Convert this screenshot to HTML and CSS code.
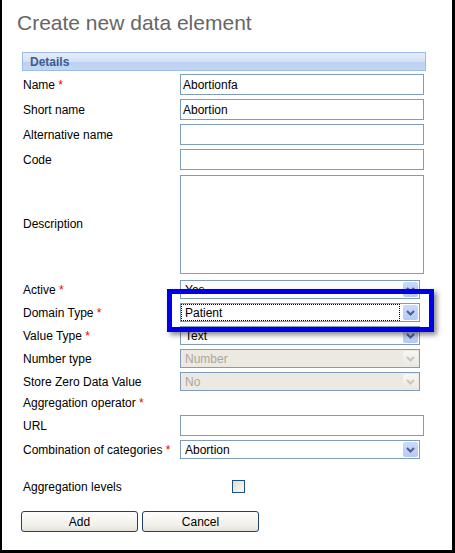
FILE: index.html
```html
<!DOCTYPE html>
<html>
<head>
<meta charset="utf-8">
<title>Create new data element</title>
<link rel="stylesheet" href="styles.css">
</head>
<body>
<h1 class="title">Create new data element</h1>
<div class="form">
  <div class="section-head">Details</div>
  <div class="grid">
    <label class="lbl">Name <span class="req">*</span></label>
    <div class="input">Abortionfa</div>

    <label class="lbl">Short name</label>
    <div class="input">Abortion</div>

    <label class="lbl">Alternative name</label>
    <div class="input"></div>

    <label class="lbl">Code</label>
    <div class="input"></div>

    <label class="lbl">Description</label>
    <div class="input textarea"></div>

    <label class="lbl first-select">Active <span class="req">*</span></label>
    <div class="select first-select"><span class="val">Yes</span><span class="arrow"><svg width="9" height="6" viewBox="0 0 9 6"><path d="M1 1 L4.5 4.5 L8 1" fill="none" stroke="#4d6185" stroke-width="2"/></svg></span></div>

    <label class="lbl">Domain Type <span class="req">*</span></label>
    <div class="select"><span class="val focus">Patient</span><span class="arrow"><svg width="9" height="6" viewBox="0 0 9 6"><path d="M1 1 L4.5 4.5 L8 1" fill="none" stroke="#4d6185" stroke-width="2"/></svg></span></div>

    <label class="lbl">Value Type <span class="req">*</span></label>
    <div class="select"><span class="val">Text</span><span class="arrow"><svg width="9" height="6" viewBox="0 0 9 6"><path d="M1 1 L4.5 4.5 L8 1" fill="none" stroke="#4d6185" stroke-width="2"/></svg></span></div>

    <label class="lbl">Number type</label>
    <div class="select disabled"><span class="val">Number</span><span class="arrow"><svg width="9" height="6" viewBox="0 0 9 6"><path d="M1 1 L4.5 4.5 L8 1" fill="none" stroke="#c9c7ba" stroke-width="2"/></svg></span></div>

    <label class="lbl">Store Zero Data Value</label>
    <div class="select disabled"><span class="val">No</span><span class="arrow"><svg width="9" height="6" viewBox="0 0 9 6"><path d="M1 1 L4.5 4.5 L8 1" fill="none" stroke="#c9c7ba" stroke-width="2"/></svg></span></div>

    <label class="lbl op">Aggregation operator <span class="req">*</span></label>
    <div class="op"></div>

    <label class="lbl">URL</label>
    <div class="input"></div>

    <label class="lbl">Combination of categories <span class="req">*</span></label>
    <div class="select"><span class="val">Abortion</span><span class="arrow"><svg width="9" height="6" viewBox="0 0 9 6"><path d="M1 1 L4.5 4.5 L8 1" fill="none" stroke="#4d6185" stroke-width="2"/></svg></span></div>
  </div>

  <div class="levels">
    <span class="levels-lbl">Aggregation levels</span>
    <span class="checkbox"></span>
  </div>

  <div class="buttons">
    <button class="btn">Add</button>
    <button class="btn">Cancel</button>
  </div>
</div>
<div class="highlight"></div>
</body>
</html>
```

FILE: styles.css
```css
html, body {
  margin: 0;
  padding: 0;
}
body {
  width: 455px;
  height: 553px;
  box-sizing: border-box;
  border-left: 2px solid #000;
  border-right: 3px solid #000;
  border-bottom: 3px solid #000;
  background: #fff;
  font-family: "Liberation Sans", Arial, sans-serif;
  font-size: 12px;
  color: #000;
  position: relative;
  overflow: hidden;
}
.title {
  margin: 11px 0 0 15px;
  font-size: 21px;
  font-weight: normal;
  line-height: 24px;
  color: #666;
}
.form {
  margin: 17px 0 0 20px;
  width: 404px;
}
.section-head {
  height: 17px;
  border: 1px solid #9dbbe8;
  background: linear-gradient(#e6eef9 0%, #d3e1f5 50%, #bcd0f1 52%, #c3d6f3 100%);
  color: #3a5c94;
  font-weight: bold;
  font-size: 12px;
  line-height: 18px;
  padding-left: 7px;
  box-sizing: content-box;
  width: 395px;
}
.grid {
  display: grid;
  grid-template-columns: 158px 244px;
  row-gap: 4px;
  align-items: center;
  margin-top: 3px;
}
.lbl {
  padding-left: 1px;
  line-height: 15px;
  padding-top: 1px;
  white-space: nowrap;
}
.req {
  color: #e00;
}
.input {
  height: 21px;
  box-sizing: border-box;
  border: 1px solid #7f9db9;
  padding-left: 2px;
  line-height: 20px;
  background: #fff;
}
.textarea {
  height: 99px;
  margin-top: 1px;
}
.first-select {
  margin-top: 2px;
}
.select {
  width: 240px;
  height: 19px;
  box-sizing: border-box;
  border: 1px solid #7f9db9;
  background: #fff;
  display: flex;
  align-items: stretch;
}
.select .val {
  flex: 1;
  padding-left: 4px;
  line-height: 18px;
}
.select .val.focus {
  outline: 1px dotted #000;
  outline-offset: -1px;
  padding-left: 4px;
  margin-right: 2px;
}
.arrow {
  width: 15px;
  height: 15px;
  margin: 1px;
  border-radius: 2px;
  background: linear-gradient(#cbdafc, #b6c9f6);
  display: flex;
  align-items: center;
  justify-content: center;
}
.disabled {
  background: #ebe9e2;
  color: #aca899;
}
.disabled .arrow {
  background: linear-gradient(#f7f7f4, #e9e8e1);
}
.op {
  height: 15px;
}
.levels {
  display: flex;
  align-items: center;
  height: 15px;
  margin-top: 20px;
}
.levels-lbl {
  width: 209px;
  padding-left: 1px;
}
.checkbox {
  width: 11px;
  height: 11px;
  border: 1px solid #1c5180;
  background: linear-gradient(135deg, #dcdcd6, #fbfbf9);
}
.buttons {
  display: flex;
  gap: 4px;
  margin: 17px 0 0 -1px;
}
.btn {
  width: 117px;
  height: 21px;
  border: 1px solid #1f3f6f;
  border-radius: 3px;
  background: linear-gradient(#fdfdfc, #f1f0ea 70%, #e3e1d8);
  font-family: "Liberation Sans", Arial, sans-serif;
  font-size: 12px;
  color: #000;
  padding: 0;
}
.highlight {
  position: absolute;
  left: 165px;
  top: 289px;
  width: 257px;
  height: 33px;
  border: 5px solid #0000e6;
  box-shadow: 3px 3px 5px rgba(0, 0, 0, 0.45);
}
```
